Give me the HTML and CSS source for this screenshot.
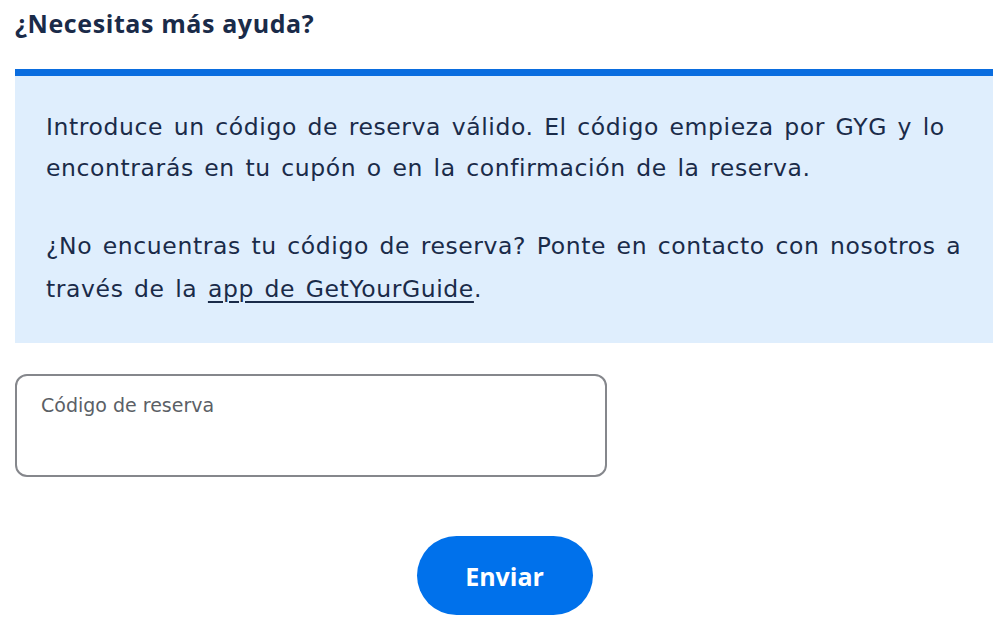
FILE: index.html
```html
<!DOCTYPE html>
<html lang="es">
<head>
<meta charset="utf-8">
<link rel="stylesheet" href="styles.css">
</head>
<body>
<main class="page">
  <h2 class="title">¿Necesitas más ayuda?</h2>
  <section class="notice">
    <p>Introduce un código de reserva válido. El código empieza por GYG y lo<br>encontrarás en tu cupón o en la confirmación de la reserva.</p>
    <p class="second">¿No encuentras tu código de reserva? Ponte en contacto con nosotros a<br>través de la <a href="#">app de GetYourGuide</a>.</p>
  </section>
  <label class="field">
    <span class="field-label">Código de reserva</span>
    <input class="field-input" type="text">
  </label>
  <div class="actions">
    <button class="submit" type="button">Enviar</button>
  </div>
</main>
</body>
</html>
```
FILE: styles.css
```css
* { box-sizing: border-box; }
html, body { margin: 0; padding: 0; background: #fff; }
body {
  font-family: "DejaVu Sans", "Open Sans", sans-serif;
  color: #1a2b49;
}
.page {
  padding: 6px 7px 0 15px;
  width: 1000px;
}
.title {
  margin: 0;
  font-family: "Open Sans", sans-serif;
  font-size: 25px;
  font-weight: 700;
  line-height: 34px;
  letter-spacing: 0.6px;
}
.notice {
  margin-top: 29px;
  border-top: 7px solid #0a6ddf;
  background: #dfeefd;
  padding: 31px 20px 32px 31px;
  font-size: 23.5px;
  line-height: 41px;
  letter-spacing: 0.6px;
  word-spacing: 2.5px;
  white-space: nowrap;
}
.notice p { margin: 0; }
.notice p + p { margin-top: 36px; }
.notice .second { line-height: 43px; }
.notice a { color: #1a2b49; text-decoration: underline; text-underline-offset: 4px; text-decoration-thickness: 2px; }
.field {
  display: block;
  position: relative;
  margin-top: 31px;
  width: 592px;
  height: 103px;
  border: 2px solid #85878c;
  border-radius: 12px;
}
.field-label {
  position: absolute;
  left: 24px;
  top: 18px;
  font-size: 19px;
  color: #5b5f66;
}
.field-input {
  border: 0;
  outline: 0;
  background: transparent;
  width: 100%;
  height: 100%;
}
.actions {
  display: flex;
  justify-content: center;
  margin-top: 59px;
}
.submit {
  width: 176px;
  height: 79px;
  border: 0;
  border-radius: 40px;
  background: #0071eb;
  color: #fff;
  font-family: "Open Sans", sans-serif;
  font-size: 25px;
  font-weight: 700;
  margin-left: 1px;
}
```
